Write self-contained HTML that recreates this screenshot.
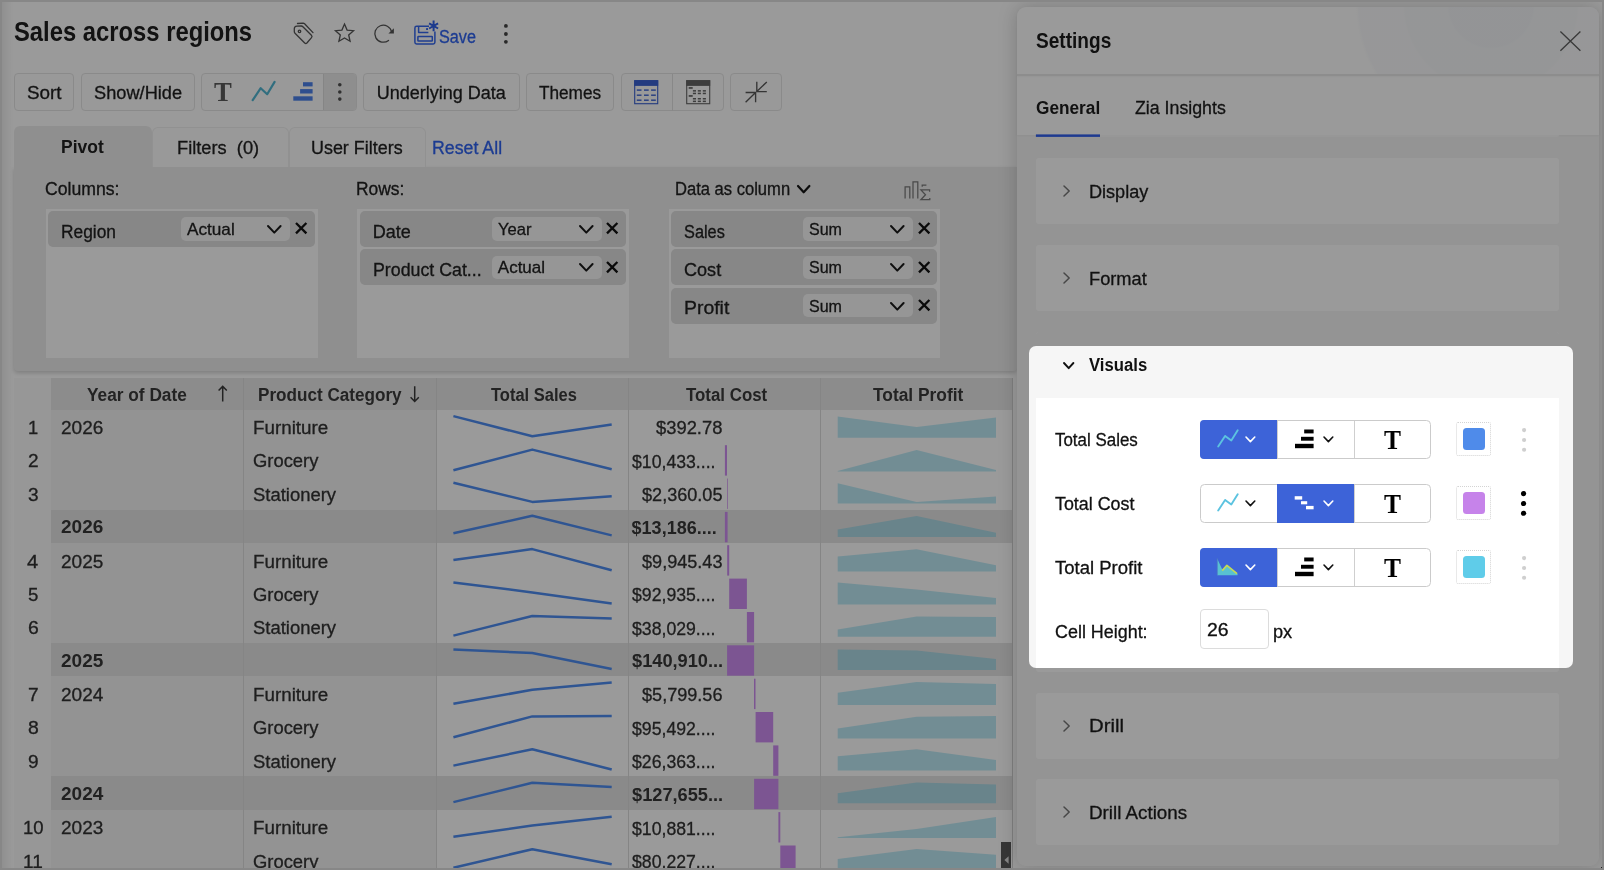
<!DOCTYPE html><html lang="en"><head><meta charset="utf-8"><title>Sales across regions</title><style>
*{box-sizing:border-box;margin:0;padding:0}
html,body{width:1604px;height:870px;overflow:hidden;background:#fff}
body{font-family:"Liberation Sans",sans-serif;color:#1f1f1f;position:relative}
#app{will-change:transform;position:absolute;left:0;top:0;width:1604px;height:870px;overflow:hidden;background:#fff}
#app div,#app svg{position:absolute}
.t{position:absolute;white-space:nowrap;line-height:1;transform-origin:0 0;display:block}
.btn{border:1px solid #e5e5e5;border-radius:4px;background:#fdfdfd}
.chip{background:#dfdfdf;border-radius:5px}
.pill{background:#f9f9f9;border-radius:5px}
.dropbox{background:#fff}
.card{background:#fff;border-radius:3px}
.seg{border:1px solid #cbcbcb;border-radius:4.5px;background:#fff}
.sw{border:1px dotted #d4d4d4;border-radius:2px}
#dim{left:1029px;top:346px;width:544px;height:322px;border-radius:7px;box-shadow:0 0 0 2000px rgba(0,0,0,0.395);pointer-events:none}
</style></head><body><div id="app"><span class="t" style="left:14.20px;top:19px;font-size:27px;color:#202020;font-weight:700;transform:scaleX(0.8813);">Sales across regions</span><svg style="left:292.00px;top:21.00px" width="24" height="26" viewBox="0 0 24 26" ><g fill="none" stroke="#555" stroke-width="1.3" stroke-linejoin="round" stroke-linecap="round"><path d="M2.3 7.8 Q2.3 5.2 4.8 5.1 L9.2 5 Q10.2 5 10.9 5.7 L19.4 14.2 Q20.6 15.4 19.5 16.6 L14.9 22 Q13.8 23 12.7 22 L3 12.2 Q2.3 11.5 2.3 10.5 Z"/><circle cx="7.5" cy="10.3" r="1.25"/><path d="M5.5 2.5 L11.2 2.2 Q12 2.2 12.6 2.8 L21 11.6"/></g></svg><svg style="left:333.00px;top:22.00px" width="23" height="22" viewBox="0 0 23 22" ><path d="M11.50 2.10 L14.09 8.04 L20.54 8.66 L15.68 12.96 L17.08 19.29 L11.50 16.00 L5.92 19.29 L7.32 12.96 L2.46 8.66 L8.91 8.04 Z" fill="none" stroke="#555" stroke-width="1.3" stroke-linejoin="miter"/></svg><svg style="left:372.00px;top:23.00px" width="24" height="21" viewBox="0 0 24 21" ><path d="M19.61 8.93 A8.5 8.5 0 1 0 16.53 17.40" fill="none" stroke="#555" stroke-width="1.3" stroke-linecap="round"/><path d="M16.4 10.5 L21.9 5.2 L21.9 10.5 Z" fill="#555"/></svg><svg style="left:413.00px;top:18.00px" width="27" height="28" viewBox="0 0 27 28" ><g fill="none" stroke="#3567ee" stroke-width="1.5" stroke-linejoin="round"><path d="M16 8.2 L3.6 8.2 Q1.9 8.2 1.9 9.9 L1.9 24.3 Q1.9 26 3.6 26 L20.2 26 Q21.9 26 21.9 24.3 L21.9 13.6"/><path d="M5.6 8.4 L5.6 14.4 L15.4 14.4"/><rect x="4.9" y="18.6" width="14.4" height="4.5" rx="0.5"/></g><rect x="13.1" y="10.1" width="1.9" height="1.9" fill="#3567ee"/><g stroke="#2f60ea" stroke-width="2" stroke-linecap="butt"><path d="M20.6 2.6 L20.6 13.2 M16.1 5.3 L25.1 10.5 M25.1 5.3 L16.1 10.5"/></g></svg><span class="t" style="left:439.00px;top:28px;font-size:18px;color:#2f63f0;-webkit-text-stroke:0.3px;transform:scaleX(0.9018);">Save</span><svg style="left:502.90px;top:22.70px" width="5.8" height="21.7" viewBox="0 0 5.8 21.7" ><circle cx="2.9" cy="2.9" r="1.9" fill="#444"/><circle cx="2.9" cy="11.000000000000002" r="1.9" fill="#444"/><circle cx="2.9" cy="18.799999999999997" r="1.9" fill="#444"/></svg><div class="btn" style="left:14.00px;top:73.00px;width:60.00px;height:38.20px;"></div><span class="t" style="left:26.70px;top:84px;font-size:18px;color:#1f1f1f;-webkit-text-stroke:0.3px;transform:scaleX(1.0480);">Sort</span><div class="btn" style="left:80.50px;top:73.00px;width:114.30px;height:38.20px;"></div><span class="t" style="left:93.70px;top:84px;font-size:18px;color:#1f1f1f;-webkit-text-stroke:0.3px;transform:scaleX(1.0121);">Show/Hide</span><div class="btn" style="left:201.00px;top:73.00px;width:155.60px;height:38.20px;"><div style="left:121px;top:0;width:33px;height:36.2px;background:#ebebeb;border-left:1px solid #dcdcdc;border-radius:0 3px 3px 0"></div></div><span class="t" style="left:213.90px;top:79px;font-size:26.8px;color:#5c5c5c;font-weight:700;font-family:'Liberation Serif', serif;transform:scaleX(0.9958);">T</span><svg style="left:250.00px;top:80.00px" width="28" height="23" viewBox="0 0 28 23" ><path d="M2.7 20.2 L10.7 8.2 L17.2 14.2 L24.6 1.9" fill="none" stroke="#52b7d3" stroke-width="2.2" stroke-linecap="round" stroke-linejoin="round"/></svg><svg style="left:292.00px;top:81.00px" width="22" height="21" viewBox="0 0 22 21" ><g fill="#4d82ec"><rect x="11" y="1.2" width="9.6" height="4.2"/><rect x="8.1" y="8.1" width="12.5" height="4.4"/><rect x="1.3" y="15.3" width="19.3" height="4.4"/></g></svg><svg style="left:337.00px;top:81.50px" width="5.6" height="19.9" viewBox="0 0 5.6 19.9" ><circle cx="2.8" cy="2.8" r="1.8" fill="#505050"/><circle cx="2.8" cy="10.000000000000004" r="1.8" fill="#505050"/><circle cx="2.8" cy="17.099999999999998" r="1.8" fill="#505050"/></svg><div class="btn" style="left:363.40px;top:73.00px;width:156.20px;height:38.20px;"></div><span class="t" style="left:376.70px;top:84px;font-size:18px;color:#1f1f1f;-webkit-text-stroke:0.3px;">Underlying Data</span><div class="btn" style="left:526.30px;top:73.00px;width:87.90px;height:38.20px;"></div><span class="t" style="left:539.20px;top:84px;font-size:18px;color:#1f1f1f;-webkit-text-stroke:0.3px;transform:scaleX(0.9549);">Themes</span><div class="btn" style="left:621.20px;top:73.00px;width:102.40px;height:38.20px;"><div style="left:49.8px;top:0;width:1px;height:36.5px;background:#e2e2e2"></div></div><svg style="left:634.20px;top:80.00px" width="25" height="25" viewBox="0 0 25 25" ><rect x="0.7" y="0.7" width="23" height="23" fill="none" stroke="#3b62d4" stroke-width="1.1"/><rect x="0.2" y="0.2" width="24" height="5.7" fill="#3b62d4"/><rect x="2.8" y="9.4" width="4.7" height="1.4" fill="#3b62d4"/><rect x="10.0" y="9.4" width="4.7" height="1.4" fill="#3b62d4"/><rect x="17.1" y="9.4" width="4.7" height="1.4" fill="#3b62d4"/><rect x="2.8" y="14.5" width="4.7" height="1.4" fill="#3b62d4"/><rect x="10.0" y="14.5" width="4.7" height="1.4" fill="#3b62d4"/><rect x="17.1" y="14.5" width="4.7" height="1.4" fill="#3b62d4"/><rect x="2.8" y="19.5" width="4.7" height="1.4" fill="#3b62d4"/><rect x="10.0" y="19.5" width="4.7" height="1.4" fill="#3b62d4"/><rect x="17.1" y="19.5" width="4.7" height="1.4" fill="#3b62d4"/></svg><svg style="left:686.10px;top:80.00px" width="25" height="25" viewBox="0 0 25 25" ><rect x="0.7" y="0.7" width="23" height="23" fill="none" stroke="#666" stroke-width="1.1"/><rect x="0.2" y="0.2" width="24" height="5.7" fill="#666"/><rect x="2.7" y="7.1" width="4" height="1.7" fill="#666"/><rect x="2.7" y="15.1" width="4" height="1.7" fill="#666"/><rect x="6.9" y="10.1" width="3.1" height="1.5" fill="#666"/><rect x="11.8" y="10.1" width="3.1" height="1.5" fill="#666"/><rect x="16.8" y="10.1" width="3.1" height="1.5" fill="#666"/><rect x="6.9" y="12.7" width="3.1" height="1.5" fill="#666"/><rect x="11.8" y="12.7" width="3.1" height="1.5" fill="#666"/><rect x="16.8" y="12.7" width="3.1" height="1.5" fill="#666"/><rect x="6.9" y="18.0" width="3.1" height="1.5" fill="#666"/><rect x="11.8" y="18.0" width="3.1" height="1.5" fill="#666"/><rect x="16.8" y="18.0" width="3.1" height="1.5" fill="#666"/><rect x="6.9" y="20.6" width="3.1" height="1.5" fill="#666"/><rect x="11.8" y="20.6" width="3.1" height="1.5" fill="#666"/><rect x="16.8" y="20.6" width="3.1" height="1.5" fill="#666"/></svg><div class="btn" style="left:730.40px;top:73.00px;width:51.20px;height:38.20px;"></div><svg style="left:744.00px;top:80.00px" width="25" height="25" viewBox="0 0 25 25" ><g fill="none" stroke="#585858" stroke-width="1.35" stroke-linecap="butt" stroke-linejoin="miter"><path d="M22.8 1.9 L12.8 11.6 M12.8 1.7 L12.8 11.6 L22.8 11.6"/><path d="M1.6 22.3 L11.6 12.5 M1.6 12.5 L11.6 12.5 L11.6 22.3"/></g></svg><div style="left:14.00px;top:166.50px;width:1003.00px;height:204.00px;background:#ededed;border-radius:0 0 4px 4px;box-shadow:0 2px 4px rgba(0,0,0,0.18)"></div><div style="left:14.00px;top:126.00px;width:137.50px;height:41.00px;background:#ededed;border-radius:6px 6px 0 0"></div><div style="left:152.00px;top:127.00px;width:136.50px;height:39.50px;background:#fefefe;border:1px solid #f0f0f0;border-bottom:none;border-radius:6px 6px 0 0"></div><div style="left:289.00px;top:127.00px;width:136.50px;height:39.50px;background:#fefefe;border:1px solid #f0f0f0;border-bottom:none;border-radius:6px 6px 0 0"></div><span class="t" style="left:61.30px;top:138px;font-size:18px;color:#222;font-weight:700;transform:scaleX(0.9701);">Pivot</span><span class="t" style="left:177.20px;top:139px;font-size:18px;color:#222;-webkit-text-stroke:0.3px;transform:scaleX(1.0136);">Filters&nbsp; (0)</span><span class="t" style="left:311.20px;top:139px;font-size:18px;color:#222;-webkit-text-stroke:0.3px;transform:scaleX(0.9955);">User Filters</span><span class="t" style="left:431.70px;top:139px;font-size:18px;color:#2f63f0;-webkit-text-stroke:0.3px;transform:scaleX(0.9867);">Reset All</span><span class="t" style="left:45.10px;top:181px;font-size:17.5px;color:#222;-webkit-text-stroke:0.3px;transform:scaleX(1.0078);">Columns:</span><span class="t" style="left:356.40px;top:181px;font-size:17.5px;color:#222;-webkit-text-stroke:0.3px;transform:scaleX(0.9954);">Rows:</span><span class="t" style="left:675.20px;top:181px;font-size:17.5px;color:#222;-webkit-text-stroke:0.3px;transform:scaleX(0.9466);">Data as column</span><svg style="left:796.40px;top:184.05px" width="15.4" height="10.3" viewBox="0 0 15.4 10.3" ><path d="M2 2 L7.7 8.3 L13.4 2" fill="none" stroke="#151515" stroke-width="2.2" stroke-linecap="round" stroke-linejoin="round"/></svg><svg style="left:903.00px;top:180.00px" width="30" height="22" viewBox="0 0 30 22" ><g fill="none" stroke="#7a7a7a" stroke-width="1.25"><path d="M2.1 18.6 L2.1 6.8 L6.8 6.8 L6.8 18.6"/><path d="M10 18.6 L10 1.8 L14.8 1.8 L14.8 18.6"/><path d="M26.6 11.8 L26.6 9.9 L17.9 9.9 L22.5 14.8 L17.9 19.7 L26.8 19.7 L26.8 17.9" stroke-linejoin="miter"/><path d="M19.2 6.8 L19.2 5 L23.4 5"/></g></svg><div class="dropbox" style="left:46.00px;top:209.00px;width:271.80px;height:148.60px;"></div><div class="dropbox" style="left:357.20px;top:209.00px;width:271.80px;height:148.60px;"></div><div class="dropbox" style="left:668.60px;top:209.00px;width:271.40px;height:148.60px;"></div><div class="chip" style="left:48.40px;top:211.00px;width:266.60px;height:36.00px;"></div><div class="pill" style="left:180.80px;top:217.30px;width:109.20px;height:23.30px;"></div><span class="t" style="left:61.20px;top:223px;font-size:18px;color:#222;-webkit-text-stroke:0.3px;transform:scaleX(0.9641);">Region</span><span class="t" style="left:186.50px;top:221px;font-size:17px;color:#222;-webkit-text-stroke:0.3px;transform:scaleX(1.0095);">Actual</span><svg style="left:266.00px;top:224.00px" width="16.6" height="10.6" viewBox="0 0 16.6 10.6" ><path d="M2 2 L8.3 8.6 L14.6 2" fill="none" stroke="#1a1a1a" stroke-width="2.0" stroke-linecap="round" stroke-linejoin="round"/></svg><svg style="left:293.90px;top:221.30px" width="14.4" height="14.4" viewBox="0 0 14.4 14.4" ><path d="M2 2 L12.4 12.4 M12.4 2 L2 12.4" fill="none" stroke="#111" stroke-width="2.3" stroke-linecap="butt"/></svg><div class="chip" style="left:360.00px;top:211.00px;width:266.00px;height:36.00px;"></div><div class="pill" style="left:492.00px;top:217.30px;width:109.50px;height:23.30px;"></div><span class="t" style="left:372.80px;top:223px;font-size:18px;color:#222;-webkit-text-stroke:0.3px;">Date</span><span class="t" style="left:497.80px;top:221px;font-size:17px;color:#222;-webkit-text-stroke:0.3px;transform:scaleX(0.9779);">Year</span><svg style="left:578.10px;top:224.00px" width="16.6" height="10.6" viewBox="0 0 16.6 10.6" ><path d="M2 2 L8.3 8.6 L14.6 2" fill="none" stroke="#1a1a1a" stroke-width="2.0" stroke-linecap="round" stroke-linejoin="round"/></svg><svg style="left:605.30px;top:221.30px" width="14.4" height="14.4" viewBox="0 0 14.4 14.4" ><path d="M2 2 L12.4 12.4 M12.4 2 L2 12.4" fill="none" stroke="#111" stroke-width="2.3" stroke-linecap="butt"/></svg><div class="chip" style="left:360.00px;top:249.30px;width:266.00px;height:36.00px;"></div><div class="pill" style="left:492.00px;top:255.60px;width:109.50px;height:23.30px;"></div><span class="t" style="left:372.80px;top:261px;font-size:18px;color:#222;-webkit-text-stroke:0.3px;transform:scaleX(0.9876);">Product Cat...</span><span class="t" style="left:497.80px;top:259px;font-size:17px;color:#222;-webkit-text-stroke:0.3px;">Actual</span><svg style="left:578.10px;top:262.30px" width="16.6" height="10.6" viewBox="0 0 16.6 10.6" ><path d="M2 2 L8.3 8.6 L14.6 2" fill="none" stroke="#1a1a1a" stroke-width="2.0" stroke-linecap="round" stroke-linejoin="round"/></svg><svg style="left:605.30px;top:259.60px" width="14.4" height="14.4" viewBox="0 0 14.4 14.4" ><path d="M2 2 L12.4 12.4 M12.4 2 L2 12.4" fill="none" stroke="#111" stroke-width="2.3" stroke-linecap="butt"/></svg><div class="chip" style="left:671.20px;top:211.00px;width:266.10px;height:36.00px;"></div><div class="pill" style="left:803.10px;top:217.30px;width:110.20px;height:23.30px;"></div><span class="t" style="left:684.00px;top:223px;font-size:18px;color:#222;-webkit-text-stroke:0.3px;transform:scaleX(0.9060);">Sales</span><span class="t" style="left:808.80px;top:221px;font-size:17px;color:#222;-webkit-text-stroke:0.3px;transform:scaleX(0.9437);">Sum</span><svg style="left:889.00px;top:224.00px" width="16.6" height="10.6" viewBox="0 0 16.6 10.6" ><path d="M2 2 L8.3 8.6 L14.6 2" fill="none" stroke="#1a1a1a" stroke-width="2.0" stroke-linecap="round" stroke-linejoin="round"/></svg><svg style="left:917.00px;top:221.30px" width="14.4" height="14.4" viewBox="0 0 14.4 14.4" ><path d="M2 2 L12.4 12.4 M12.4 2 L2 12.4" fill="none" stroke="#111" stroke-width="2.3" stroke-linecap="butt"/></svg><div class="chip" style="left:671.20px;top:249.30px;width:266.10px;height:36.00px;"></div><div class="pill" style="left:803.10px;top:255.60px;width:110.20px;height:23.30px;"></div><span class="t" style="left:684.00px;top:261px;font-size:18px;color:#222;-webkit-text-stroke:0.3px;transform:scaleX(1.0050);">Cost</span><span class="t" style="left:808.80px;top:259px;font-size:17px;color:#222;-webkit-text-stroke:0.3px;transform:scaleX(0.9437);">Sum</span><svg style="left:889.00px;top:262.30px" width="16.6" height="10.6" viewBox="0 0 16.6 10.6" ><path d="M2 2 L8.3 8.6 L14.6 2" fill="none" stroke="#1a1a1a" stroke-width="2.0" stroke-linecap="round" stroke-linejoin="round"/></svg><svg style="left:917.00px;top:259.60px" width="14.4" height="14.4" viewBox="0 0 14.4 14.4" ><path d="M2 2 L12.4 12.4 M12.4 2 L2 12.4" fill="none" stroke="#111" stroke-width="2.3" stroke-linecap="butt"/></svg><div class="chip" style="left:671.20px;top:287.60px;width:266.10px;height:36.00px;"></div><div class="pill" style="left:803.10px;top:293.90px;width:110.20px;height:23.30px;"></div><span class="t" style="left:684.00px;top:299px;font-size:18px;color:#222;-webkit-text-stroke:0.3px;transform:scaleX(1.0782);">Profit</span><span class="t" style="left:808.80px;top:298px;font-size:17px;color:#222;-webkit-text-stroke:0.3px;transform:scaleX(0.9437);">Sum</span><svg style="left:889.00px;top:300.60px" width="16.6" height="10.6" viewBox="0 0 16.6 10.6" ><path d="M2 2 L8.3 8.6 L14.6 2" fill="none" stroke="#1a1a1a" stroke-width="2.0" stroke-linecap="round" stroke-linejoin="round"/></svg><svg style="left:917.00px;top:297.90px" width="14.4" height="14.4" viewBox="0 0 14.4 14.4" ><path d="M2 2 L12.4 12.4 M12.4 2 L2 12.4" fill="none" stroke="#111" stroke-width="2.3" stroke-linecap="butt"/></svg><div style="left:14.00px;top:377.50px;width:998.60px;height:500.00px;background:#fff"></div><div style="left:51.40px;top:377.50px;width:384.60px;height:500.00px;background:#f3f3f3"></div><div style="left:14.00px;top:377.50px;width:37.40px;height:500.00px;background:#fafafa"></div><div style="left:51.40px;top:377.50px;width:961.20px;height:32.40px;background:#e8e8e8"></div><div style="left:51.40px;top:509.58px;width:961.20px;height:33.36px;background:#e5e5e5"></div><div style="left:51.40px;top:643.02px;width:961.20px;height:33.36px;background:#e5e5e5"></div><div style="left:51.40px;top:776.46px;width:961.20px;height:33.36px;background:#e5e5e5"></div><div style="left:243.10px;top:377.50px;width:1.00px;height:500.00px;background:#dcdcdc"></div><div style="left:435.50px;top:377.50px;width:1.00px;height:500.00px;background:#dcdcdc"></div><div style="left:627.80px;top:377.50px;width:1.00px;height:500.00px;background:#dcdcdc"></div><div style="left:819.80px;top:377.50px;width:1.00px;height:500.00px;background:#dcdcdc"></div><div style="left:1012.10px;top:377.50px;width:1.00px;height:500.00px;background:#d4d4d4"></div><span class="t" style="left:87.40px;top:386px;font-size:18px;color:#3a3a3a;font-weight:700;transform:scaleX(0.9592);">Year of Date</span><span class="t" style="left:257.50px;top:386px;font-size:18px;color:#3a3a3a;font-weight:700;transform:scaleX(0.9508);">Product Category</span><span class="t" style="left:491.00px;top:386px;font-size:18px;color:#3a3a3a;font-weight:700;transform:scaleX(0.9157);">Total Sales</span><span class="t" style="left:685.60px;top:386px;font-size:18px;color:#3a3a3a;font-weight:700;transform:scaleX(0.9369);">Total Cost</span><span class="t" style="left:873.00px;top:386px;font-size:18px;color:#3a3a3a;font-weight:700;transform:scaleX(0.9642);">Total Profit</span><svg style="left:217.00px;top:384.00px" width="12" height="20" viewBox="0 0 12 20" ><path d="M5.7 17.6 L5.7 2.6 M1.6 6.6 L5.7 2.4 L9.8 6.6" fill="none" stroke="#3a3a3a" stroke-width="1.5"/></svg><svg style="left:409.30px;top:384.00px" width="12" height="20" viewBox="0 0 12 20" ><path d="M5.7 2.2 L5.7 17.2 M1.6 13.2 L5.7 17.4 L9.8 13.2" fill="none" stroke="#3a3a3a" stroke-width="1.5"/></svg><span class="t" style="left:27.80px;top:419px;font-size:18px;color:#333;-webkit-text-stroke:0.3px;transform:scaleX(1.0184);">1</span><span class="t" style="left:60.80px;top:419px;font-size:18px;color:#333;-webkit-text-stroke:0.3px;transform:scaleX(1.0563);">2026</span><span class="t" style="left:253.00px;top:419px;font-size:18px;color:#333;-webkit-text-stroke:0.3px;transform:scaleX(1.0440);">Furniture</span><span class="t" style="left:655.90px;top:419px;font-size:18px;color:#333;-webkit-text-stroke:0.3px;transform:scaleX(1.0203);">$392.78</span><span class="t" style="left:27.80px;top:452px;font-size:18px;color:#333;-webkit-text-stroke:0.3px;transform:scaleX(1.0583);">2</span><span class="t" style="left:253.00px;top:452px;font-size:18px;color:#333;-webkit-text-stroke:0.3px;transform:scaleX(1.0216);">Grocery</span><span class="t" style="left:631.60px;top:453px;font-size:18px;color:#333;-webkit-text-stroke:0.3px;transform:scaleX(0.9815);">$10,433....</span><span class="t" style="left:27.80px;top:486px;font-size:18px;color:#333;-webkit-text-stroke:0.3px;transform:scaleX(1.0583);">3</span><span class="t" style="left:253.00px;top:486px;font-size:18px;color:#333;-webkit-text-stroke:0.3px;transform:scaleX(1.0241);">Stationery</span><span class="t" style="left:641.80px;top:486px;font-size:18px;color:#333;-webkit-text-stroke:0.3px;transform:scaleX(1.0053);">$2,360.05</span><span class="t" style="left:60.80px;top:518px;font-size:18px;color:#383838;font-weight:700;transform:scaleX(1.0563);">2026</span><span class="t" style="left:631.60px;top:519px;font-size:18px;color:#383838;font-weight:700;">$13,186....</span><span class="t" style="left:27.40px;top:553px;font-size:18px;color:#333;-webkit-text-stroke:0.3px;transform:scaleX(1.1183);">4</span><span class="t" style="left:60.80px;top:553px;font-size:18px;color:#333;-webkit-text-stroke:0.3px;transform:scaleX(1.0563);">2025</span><span class="t" style="left:253.00px;top:553px;font-size:18px;color:#333;-webkit-text-stroke:0.3px;transform:scaleX(1.0440);">Furniture</span><span class="t" style="left:641.80px;top:553px;font-size:18px;color:#333;-webkit-text-stroke:0.3px;transform:scaleX(1.0053);">$9,945.43</span><span class="t" style="left:28.00px;top:586px;font-size:18px;color:#333;-webkit-text-stroke:0.3px;transform:scaleX(1.0384);">5</span><span class="t" style="left:253.00px;top:586px;font-size:18px;color:#333;-webkit-text-stroke:0.3px;transform:scaleX(1.0216);">Grocery</span><span class="t" style="left:631.60px;top:586px;font-size:18px;color:#333;-webkit-text-stroke:0.3px;transform:scaleX(0.9815);">$92,935....</span><span class="t" style="left:27.80px;top:619px;font-size:18px;color:#333;-webkit-text-stroke:0.3px;transform:scaleX(1.0783);">6</span><span class="t" style="left:253.00px;top:619px;font-size:18px;color:#333;-webkit-text-stroke:0.3px;transform:scaleX(1.0241);">Stationery</span><span class="t" style="left:631.60px;top:620px;font-size:18px;color:#333;-webkit-text-stroke:0.3px;transform:scaleX(0.9815);">$38,029....</span><span class="t" style="left:60.80px;top:652px;font-size:18px;color:#383838;font-weight:700;transform:scaleX(1.0563);">2025</span><span class="t" style="left:631.60px;top:652px;font-size:18px;color:#383838;font-weight:700;transform:scaleX(1.0123);">$140,910...</span><span class="t" style="left:27.80px;top:686px;font-size:18px;color:#333;-webkit-text-stroke:0.3px;transform:scaleX(1.0583);">7</span><span class="t" style="left:60.80px;top:686px;font-size:18px;color:#333;-webkit-text-stroke:0.3px;transform:scaleX(1.0563);">2024</span><span class="t" style="left:253.00px;top:686px;font-size:18px;color:#333;-webkit-text-stroke:0.3px;transform:scaleX(1.0440);">Furniture</span><span class="t" style="left:641.80px;top:686px;font-size:18px;color:#333;-webkit-text-stroke:0.3px;transform:scaleX(1.0053);">$5,799.56</span><span class="t" style="left:27.80px;top:719px;font-size:18px;color:#333;-webkit-text-stroke:0.3px;transform:scaleX(1.0783);">8</span><span class="t" style="left:253.00px;top:719px;font-size:18px;color:#333;-webkit-text-stroke:0.3px;transform:scaleX(1.0216);">Grocery</span><span class="t" style="left:631.60px;top:720px;font-size:18px;color:#333;-webkit-text-stroke:0.3px;transform:scaleX(0.9815);">$95,492....</span><span class="t" style="left:27.80px;top:753px;font-size:18px;color:#333;-webkit-text-stroke:0.3px;transform:scaleX(1.0583);">9</span><span class="t" style="left:253.00px;top:753px;font-size:18px;color:#333;-webkit-text-stroke:0.3px;transform:scaleX(1.0241);">Stationery</span><span class="t" style="left:631.60px;top:753px;font-size:18px;color:#333;-webkit-text-stroke:0.3px;transform:scaleX(0.9815);">$26,363....</span><span class="t" style="left:60.80px;top:785px;font-size:18px;color:#383838;font-weight:700;transform:scaleX(1.0563);">2024</span><span class="t" style="left:631.60px;top:786px;font-size:18px;color:#383838;font-weight:700;transform:scaleX(1.0123);">$127,655...</span><span class="t" style="left:23.40px;top:819px;font-size:18px;color:#333;-webkit-text-stroke:0.3px;transform:scaleX(1.0284);">10</span><span class="t" style="left:60.80px;top:819px;font-size:18px;color:#333;-webkit-text-stroke:0.3px;transform:scaleX(1.0563);">2023</span><span class="t" style="left:253.00px;top:819px;font-size:18px;color:#333;-webkit-text-stroke:0.3px;transform:scaleX(1.0440);">Furniture</span><span class="t" style="left:631.60px;top:820px;font-size:18px;color:#333;-webkit-text-stroke:0.3px;transform:scaleX(0.9815);">$10,881....</span><span class="t" style="left:23.40px;top:853px;font-size:18px;color:#333;-webkit-text-stroke:0.3px;transform:scaleX(1.0595);">11</span><span class="t" style="left:253.00px;top:853px;font-size:18px;color:#333;-webkit-text-stroke:0.3px;transform:scaleX(1.0216);">Grocery</span><span class="t" style="left:631.60px;top:853px;font-size:18px;color:#333;-webkit-text-stroke:0.3px;transform:scaleX(0.9815);">$80,227....</span><svg style="left:0;top:0" width="1020" height="870" viewBox="0 0 1020 870"><path d="M453.4 416.1 L532.3 436.3 L611.7 424.4" fill="none" stroke="#4f8df2" stroke-width="2.5" stroke-linejoin="round"/><path d="M837.7 437.8 L837.7 416.4 L916.6 427.0 L996 417.6 L996 437.8 Z" fill="#5fcce9" fill-opacity="0.41"/><path d="M453.4 470.3 L532.3 449.6 L611.7 469.2" fill="none" stroke="#4f8df2" stroke-width="2.5" stroke-linejoin="round"/><path d="M837.7 471.5 L837.7 470.9 L916.6 450.0 L996 470.1 L996 471.5 Z" fill="#5fcce9" fill-opacity="0.41"/><rect x="724.9" y="445.2" width="2.1" height="30.4" fill="#cd8df2"/><path d="M453.4 482.7 L532.3 501.9 L611.7 496.2" fill="none" stroke="#4f8df2" stroke-width="2.5" stroke-linejoin="round"/><path d="M837.7 503.4 L837.7 483.3 L916.6 502.0 L996 496.5 L996 503.4 Z" fill="#5fcce9" fill-opacity="0.41"/><rect x="727.1" y="478.5" width="0.7" height="30.4" fill="#cd8df2"/><path d="M453.4 533.3 L532.3 515.8 L611.7 535.4" fill="none" stroke="#4f8df2" stroke-width="2.5" stroke-linejoin="round"/><path d="M837.7 537.0 L837.7 529.5 L916.6 515.9 L996 532.8 L996 537.0 Z" fill="#5fcce9" fill-opacity="0.41"/><rect x="724.9" y="511.9" width="2.7" height="30.4" fill="#cd8df2"/><path d="M453.4 560.1 L532.3 549.1 L611.7 570.3" fill="none" stroke="#4f8df2" stroke-width="2.5" stroke-linejoin="round"/><path d="M837.7 571.6 L837.7 556.5 L916.6 549.3 L996 565.3 L996 571.6 Z" fill="#5fcce9" fill-opacity="0.41"/><rect x="727.2" y="545.2" width="2.0" height="30.4" fill="#cd8df2"/><path d="M453.4 582.5 L532.3 592.4 L611.7 603.5" fill="none" stroke="#4f8df2" stroke-width="2.5" stroke-linejoin="round"/><path d="M837.7 604.5 L837.7 582.5 L916.6 589.6 L996 597.9 L996 604.5 Z" fill="#5fcce9" fill-opacity="0.41"/><rect x="729.2" y="578.6" width="17.7" height="30.4" fill="#cd8df2"/><path d="M453.4 635.6 L532.3 616.0 L611.7 618.5" fill="none" stroke="#4f8df2" stroke-width="2.5" stroke-linejoin="round"/><path d="M837.7 636.7 L837.7 629.4 L916.6 616.5 L996 617.0 L996 636.7 Z" fill="#5fcce9" fill-opacity="0.41"/><rect x="746.9" y="612.0" width="7.2" height="30.4" fill="#cd8df2"/><path d="M453.4 649.6 L532.3 653.1 L611.7 669.0" fill="none" stroke="#4f8df2" stroke-width="2.5" stroke-linejoin="round"/><path d="M837.7 670.1 L837.7 649.4 L916.6 650.5 L996 659.1 L996 670.1 Z" fill="#5fcce9" fill-opacity="0.41"/><rect x="727.1" y="645.3" width="27.0" height="30.4" fill="#cd8df2"/><path d="M453.4 703.8 L532.3 689.8 L611.7 682.4" fill="none" stroke="#4f8df2" stroke-width="2.5" stroke-linejoin="round"/><path d="M837.7 704.9 L837.7 692.8 L916.6 682.1 L996 684.0 L996 704.9 Z" fill="#5fcce9" fill-opacity="0.41"/><rect x="754.0" y="678.7" width="1.5" height="30.4" fill="#cd8df2"/><path d="M453.4 737.3 L532.3 716.4 L611.7 716.1" fill="none" stroke="#4f8df2" stroke-width="2.5" stroke-linejoin="round"/><path d="M837.7 738.5 L837.7 728.6 L916.6 716.7 L996 715.9 L996 738.5 Z" fill="#5fcce9" fill-opacity="0.41"/><rect x="755.6" y="712.0" width="17.6" height="30.4" fill="#cd8df2"/><path d="M453.4 765.6 L532.3 749.3 L611.7 769.5" fill="none" stroke="#4f8df2" stroke-width="2.5" stroke-linejoin="round"/><path d="M837.7 770.6 L837.7 756.2 L916.6 749.3 L996 760.1 L996 770.6 Z" fill="#5fcce9" fill-opacity="0.41"/><rect x="773.2" y="745.4" width="5.2" height="30.4" fill="#cd8df2"/><path d="M453.4 802.1 L532.3 782.8 L611.7 786.9" fill="none" stroke="#4f8df2" stroke-width="2.5" stroke-linejoin="round"/><path d="M837.7 803.2 L837.7 793.3 L916.6 782.5 L996 784.4 L996 803.2 Z" fill="#5fcce9" fill-opacity="0.41"/><rect x="754.1" y="778.8" width="24.3" height="30.4" fill="#cd8df2"/><path d="M453.4 836.8 L532.3 825.5 L611.7 816.7" fill="none" stroke="#4f8df2" stroke-width="2.5" stroke-linejoin="round"/><path d="M837.7 837.9 L837.7 837.3 L916.6 829.1 L996 816.9 L996 837.9 Z" fill="#5fcce9" fill-opacity="0.41"/><rect x="778.4" y="812.1" width="1.9" height="30.4" fill="#cd8df2"/><path d="M453.4 867.7 L532.3 849.2 L611.7 864.2" fill="none" stroke="#4f8df2" stroke-width="2.5" stroke-linejoin="round"/><path d="M837.7 871.2 L837.7 858.9 L916.6 849.0 L996 854.8 L996 871.2 Z" fill="#5fcce9" fill-opacity="0.41"/><rect x="780.3" y="845.5" width="15.3" height="30.4" fill="#cd8df2"/></svg><div style="left:1001.00px;top:842.40px;width:10.00px;height:26.00px;background:#5a5a5a"></div><svg style="left:1003.00px;top:855.00px" width="7" height="10" viewBox="0 0 7 10" ><path d="M5.6 1.2 L1.4 5 L5.6 8.8 Z" fill="#ddd"/></svg><div style="left:1016.50px;top:7.00px;width:582.80px;height:858.50px;background:#f6f6f6;border-radius:9px;box-shadow:0 0 20px rgba(0,0,0,0.2)"></div><div style="left:1016.50px;top:7.00px;width:582.80px;height:127.50px;background:#fff;border-radius:9px 9px 0 0;box-shadow:0 1px 3px rgba(0,0,0,0.05)"></div><div style="left:1016.50px;top:7.00px;width:582.80px;height:68.00px;border-radius:9px 9px 0 0;background:radial-gradient(circle at 474px -2px, rgba(226,231,238,0.36) 0, rgba(226,231,238,0.36) 42px, rgba(232,236,242,0.34) 44px, rgba(232,236,242,0.34) 86px, rgba(241,243,247,0.34) 88px, rgba(241,243,247,0.34) 132px, rgba(255,255,255,0) 135px)"></div><div style="left:1016.50px;top:74.40px;width:582.80px;height:1.80px;background:#e9e9e9;box-shadow:0 1px 2px rgba(0,0,0,0.04)"></div><span class="t" style="left:1035.80px;top:31px;font-size:21.5px;color:#1d1d1d;font-weight:700;transform:scaleX(0.8877);">Settings</span><svg style="left:1558.00px;top:29.00px" width="25" height="25" viewBox="0 0 25 25" ><path d="M2.4 2.6 L22.4 21.8 M22.4 2.6 L2.4 21.8" stroke="#606060" stroke-width="1.35" fill="none"/></svg><span class="t" style="left:1035.80px;top:99px;font-size:18px;color:#1d1d1d;font-weight:700;transform:scaleX(0.9575);">General</span><span class="t" style="left:1134.90px;top:99px;font-size:18px;color:#1d1d1d;-webkit-text-stroke:0.3px;transform:scaleX(0.9865);">Zia Insights</span><div style="left:1036.00px;top:134.50px;width:523.00px;height:2.80px;background:#fbfbfb;border-radius:0 0 3px 3px"></div><svg style="left:1030.00px;top:130.00px" width="80" height="10" viewBox="0 0 80 10" ><rect x="5.9" y="4.4" width="64.1" height="2.5" fill="#3361ee"/></svg><div class="card" style="left:1036.00px;top:158.00px;width:523.20px;height:66.40px;"></div><svg style="left:1061.50px;top:184.20px" width="9.2" height="14" viewBox="0 0 9.2 14" ><path d="M2 2 L7.2 7.0 L2 12" fill="none" stroke="#767676" stroke-width="1.5" stroke-linecap="round" stroke-linejoin="round"/></svg><span class="t" style="left:1088.50px;top:183px;font-size:18px;color:#1d1d1d;-webkit-text-stroke:0.3px;transform:scaleX(1.0046);">Display</span><div class="card" style="left:1036.00px;top:245.00px;width:523.20px;height:65.90px;"></div><svg style="left:1061.50px;top:270.95px" width="9.2" height="14" viewBox="0 0 9.2 14" ><path d="M2 2 L7.2 7.0 L2 12" fill="none" stroke="#767676" stroke-width="1.5" stroke-linecap="round" stroke-linejoin="round"/></svg><span class="t" style="left:1088.50px;top:270px;font-size:18px;color:#1d1d1d;-webkit-text-stroke:0.3px;transform:scaleX(1.0138);">Format</span><div class="card" style="left:1036.00px;top:693.00px;width:523.20px;height:65.50px;"></div><svg style="left:1061.50px;top:718.75px" width="9.2" height="14" viewBox="0 0 9.2 14" ><path d="M2 2 L7.2 7.0 L2 12" fill="none" stroke="#767676" stroke-width="1.5" stroke-linecap="round" stroke-linejoin="round"/></svg><span class="t" style="left:1088.50px;top:717px;font-size:18px;color:#1d1d1d;-webkit-text-stroke:0.3px;transform:scaleX(1.1258);">Drill</span><div class="card" style="left:1036.00px;top:779.00px;width:523.20px;height:65.90px;"></div><svg style="left:1061.50px;top:804.95px" width="9.2" height="14" viewBox="0 0 9.2 14" ><path d="M2 2 L7.2 7.0 L2 12" fill="none" stroke="#767676" stroke-width="1.5" stroke-linecap="round" stroke-linejoin="round"/></svg><span class="t" style="left:1088.50px;top:804px;font-size:18px;color:#1d1d1d;-webkit-text-stroke:0.3px;transform:scaleX(1.0433);">Drill Actions</span><div class="card" style="left:1036.00px;top:331.60px;width:523.20px;height:340.40px;"></div><div style="left:1036.00px;top:331.60px;width:523.20px;height:66.00px;background:#f6f6f6;border-radius:3px 3px 0 0"></div><svg style="left:1062.00px;top:360.60px" width="13.4" height="9.2" viewBox="0 0 13.4 9.2" ><path d="M2 2 L6.7 7.2 L11.4 2" fill="none" stroke="#111" stroke-width="1.9" stroke-linecap="round" stroke-linejoin="round"/></svg><span class="t" style="left:1088.50px;top:356px;font-size:18px;color:#111;font-weight:700;transform:scaleX(0.9280);">Visuals</span><span class="t" style="left:1054.60px;top:431px;font-size:18px;color:#111;-webkit-text-stroke:0.3px;transform:scaleX(0.9402);">Total Sales</span><div class="seg" style="left:1200.00px;top:420.00px;width:231.00px;height:39.00px;"></div><div style="left:1277.00px;top:421.00px;width:1.00px;height:37.00px;background:#cfcfcf"></div><div style="left:1354.00px;top:421.00px;width:1.00px;height:37.00px;background:#cfcfcf"></div><div style="left:1200.00px;top:420.00px;width:77.40px;height:39.00px;background:#3d63d8;border-radius:4px 0 0 4px"></div><svg style="left:1215.50px;top:428.00px" width="24" height="21" viewBox="0 0 24 21" ><path d="M2.2 18.5 L9.1 7.9 L15.3 12.5 L21.7 2.3" fill="none" stroke="#5cc3e0" stroke-width="1.9" stroke-linecap="round" stroke-linejoin="round"/></svg><svg style="left:1244.00px;top:435.20px" width="12.8" height="8.6" viewBox="0 0 12.8 8.6" ><path d="M2 2 L6.4 6.6 L10.8 2" fill="none" stroke="#fff" stroke-width="1.6" stroke-linecap="round" stroke-linejoin="round"/></svg><svg style="left:1294.00px;top:428.00px" width="21" height="21" viewBox="0 0 21 21" ><g fill="#000"><rect x="10.2" y="1.5" width="9.4" height="3.9"/><rect x="7" y="8.8" width="12.6" height="3.9"/><rect x="1" y="15.8" width="18.6" height="4.4"/></g></svg><svg style="left:1322.40px;top:435.20px" width="12.8" height="8.6" viewBox="0 0 12.8 8.6" ><path d="M2 2 L6.4 6.6 L10.8 2" fill="none" stroke="#111" stroke-width="1.6" stroke-linecap="round" stroke-linejoin="round"/></svg><span class="t" style="left:1384.40px;top:427px;font-size:27px;color:#000;font-weight:700;font-family:'Liberation Serif', serif;transform:scaleX(0.9436);">T</span><div class="sw" style="left:1456.00px;top:421.60px;width:34.80px;height:34.80px;"></div><div style="left:1462.60px;top:427.80px;width:22.50px;height:22.50px;background:#4f8bea;border-radius:3.5px"></div><svg style="left:1520.90px;top:426.70px" width="6.2" height="25.899999999999988" viewBox="0 0 6.2 25.899999999999988" ><circle cx="3.1" cy="3.1" r="2.1" fill="#cfcfcf"/><circle cx="3.1" cy="12.999999999999977" r="2.1" fill="#cfcfcf"/><circle cx="3.1" cy="22.79999999999999" r="2.1" fill="#cfcfcf"/></svg><span class="t" style="left:1054.60px;top:495px;font-size:18px;color:#111;-webkit-text-stroke:0.3px;transform:scaleX(0.9919);">Total Cost</span><div class="seg" style="left:1200.00px;top:484.00px;width:231.00px;height:39.00px;"></div><div style="left:1277.00px;top:485.00px;width:1.00px;height:37.00px;background:#cfcfcf"></div><div style="left:1354.00px;top:485.00px;width:1.00px;height:37.00px;background:#cfcfcf"></div><div style="left:1277.00px;top:484.00px;width:77.40px;height:39.00px;background:#3d63d8"></div><svg style="left:1215.50px;top:492.00px" width="24" height="21" viewBox="0 0 24 21" ><path d="M2.2 18.5 L9.1 7.9 L15.3 12.5 L21.7 2.3" fill="none" stroke="#5cc3e0" stroke-width="1.9" stroke-linecap="round" stroke-linejoin="round"/></svg><svg style="left:1244.00px;top:499.20px" width="12.8" height="8.6" viewBox="0 0 12.8 8.6" ><path d="M2 2 L6.4 6.6 L10.8 2" fill="none" stroke="#111" stroke-width="1.6" stroke-linecap="round" stroke-linejoin="round"/></svg><svg style="left:1294.00px;top:495.10px" width="21" height="16" viewBox="0 0 21 16" ><g fill="#fff"><rect x="0.7" y="1.2" width="7.5" height="3.4"/><rect x="7" y="6.2" width="6.2" height="3.1"/><rect x="12" y="10.9" width="7.6" height="3.4"/></g></svg><svg style="left:1322.40px;top:499.20px" width="12.8" height="8.6" viewBox="0 0 12.8 8.6" ><path d="M2 2 L6.4 6.6 L10.8 2" fill="none" stroke="#fff" stroke-width="1.6" stroke-linecap="round" stroke-linejoin="round"/></svg><span class="t" style="left:1384.40px;top:491px;font-size:27px;color:#000;font-weight:700;font-family:'Liberation Serif', serif;transform:scaleX(0.9436);">T</span><div class="sw" style="left:1456.00px;top:485.60px;width:34.80px;height:34.80px;"></div><div style="left:1462.60px;top:491.80px;width:22.50px;height:22.50px;background:#c683ea;border-radius:3.5px"></div><svg style="left:1520.40px;top:490.20px" width="7.2" height="26.899999999999988" viewBox="0 0 7.2 26.899999999999988" ><circle cx="3.6" cy="3.6" r="2.6" fill="#000"/><circle cx="3.6" cy="13.499999999999977" r="2.6" fill="#000"/><circle cx="3.6" cy="23.29999999999999" r="2.6" fill="#000"/></svg><span class="t" style="left:1054.60px;top:559px;font-size:18px;color:#111;-webkit-text-stroke:0.3px;transform:scaleX(1.0277);">Total Profit</span><div class="seg" style="left:1200.00px;top:548.00px;width:231.00px;height:39.00px;"></div><div style="left:1277.00px;top:549.00px;width:1.00px;height:37.00px;background:#cfcfcf"></div><div style="left:1354.00px;top:549.00px;width:1.00px;height:37.00px;background:#cfcfcf"></div><div style="left:1200.00px;top:548.00px;width:77.40px;height:39.00px;background:#3d63d8;border-radius:4px 0 0 4px"></div><svg style="left:1215.60px;top:556.80px" width="24" height="20" viewBox="0 0 24 20" ><path d="M1.2 1.6 L1.2 18.2 L21.6 18.2 L21.6 16.8 L11 8.2 L6.6 13.2 Z" fill="#5ccbd0" fill-opacity="0.9"/><path d="M6.2 13.6 L10.9 8.4 L21 16.6" fill="none" stroke="#c5d955" stroke-width="1.7" stroke-linejoin="round"/><path d="M1.2 1 L1.2 18.2" stroke="#4b74c8" stroke-width="0.8"/></svg><svg style="left:1244.00px;top:563.20px" width="12.8" height="8.6" viewBox="0 0 12.8 8.6" ><path d="M2 2 L6.4 6.6 L10.8 2" fill="none" stroke="#fff" stroke-width="1.6" stroke-linecap="round" stroke-linejoin="round"/></svg><svg style="left:1294.00px;top:556.00px" width="21" height="21" viewBox="0 0 21 21" ><g fill="#000"><rect x="10.2" y="1.5" width="9.4" height="3.9"/><rect x="7" y="8.8" width="12.6" height="3.9"/><rect x="1" y="15.8" width="18.6" height="4.4"/></g></svg><svg style="left:1322.40px;top:563.20px" width="12.8" height="8.6" viewBox="0 0 12.8 8.6" ><path d="M2 2 L6.4 6.6 L10.8 2" fill="none" stroke="#111" stroke-width="1.6" stroke-linecap="round" stroke-linejoin="round"/></svg><span class="t" style="left:1384.40px;top:555px;font-size:27px;color:#000;font-weight:700;font-family:'Liberation Serif', serif;transform:scaleX(0.9436);">T</span><div class="sw" style="left:1456.00px;top:549.60px;width:34.80px;height:34.80px;"></div><div style="left:1462.60px;top:555.80px;width:22.50px;height:22.50px;background:#5fcce9;border-radius:3.5px"></div><svg style="left:1520.90px;top:554.70px" width="6.2" height="25.900000000000045" viewBox="0 0 6.2 25.900000000000045" ><circle cx="3.1" cy="3.1" r="2.1" fill="#cfcfcf"/><circle cx="3.1" cy="13.00000000000009" r="2.1" fill="#cfcfcf"/><circle cx="3.1" cy="22.800000000000047" r="2.1" fill="#cfcfcf"/></svg><span class="t" style="left:1054.60px;top:623px;font-size:18px;color:#111;-webkit-text-stroke:0.3px;transform:scaleX(0.9952);">Cell Height:</span><div style="left:1200.00px;top:609.00px;width:69.00px;height:40.00px;border:1px solid #dcdcdc;border-radius:4px;background:#fff"></div><span class="t" style="left:1207.20px;top:621px;font-size:18px;color:#111;-webkit-text-stroke:0.3px;transform:scaleX(1.0833);">26</span><span class="t" style="left:1272.90px;top:623px;font-size:18px;color:#111;-webkit-text-stroke:0.3px;transform:scaleX(1.0097);">px</span><div style="left:2.00px;top:2.00px;width:11.00px;height:866.00px;background:linear-gradient(to right, rgba(0,0,0,0.07), rgba(0,0,0,0.035) 45%, rgba(0,0,0,0))"></div><div style="left:0.00px;top:0.00px;width:1604.00px;height:870.00px;border:2px solid #dfdfdf;border-bottom-width:2px;z-index:5;pointer-events:none"></div><div style="left:1601.00px;top:867.00px;width:1.00px;height:1.00px;background:#333;z-index:6"></div><div id="dim" style="z-index:10"></div></div></body></html>
